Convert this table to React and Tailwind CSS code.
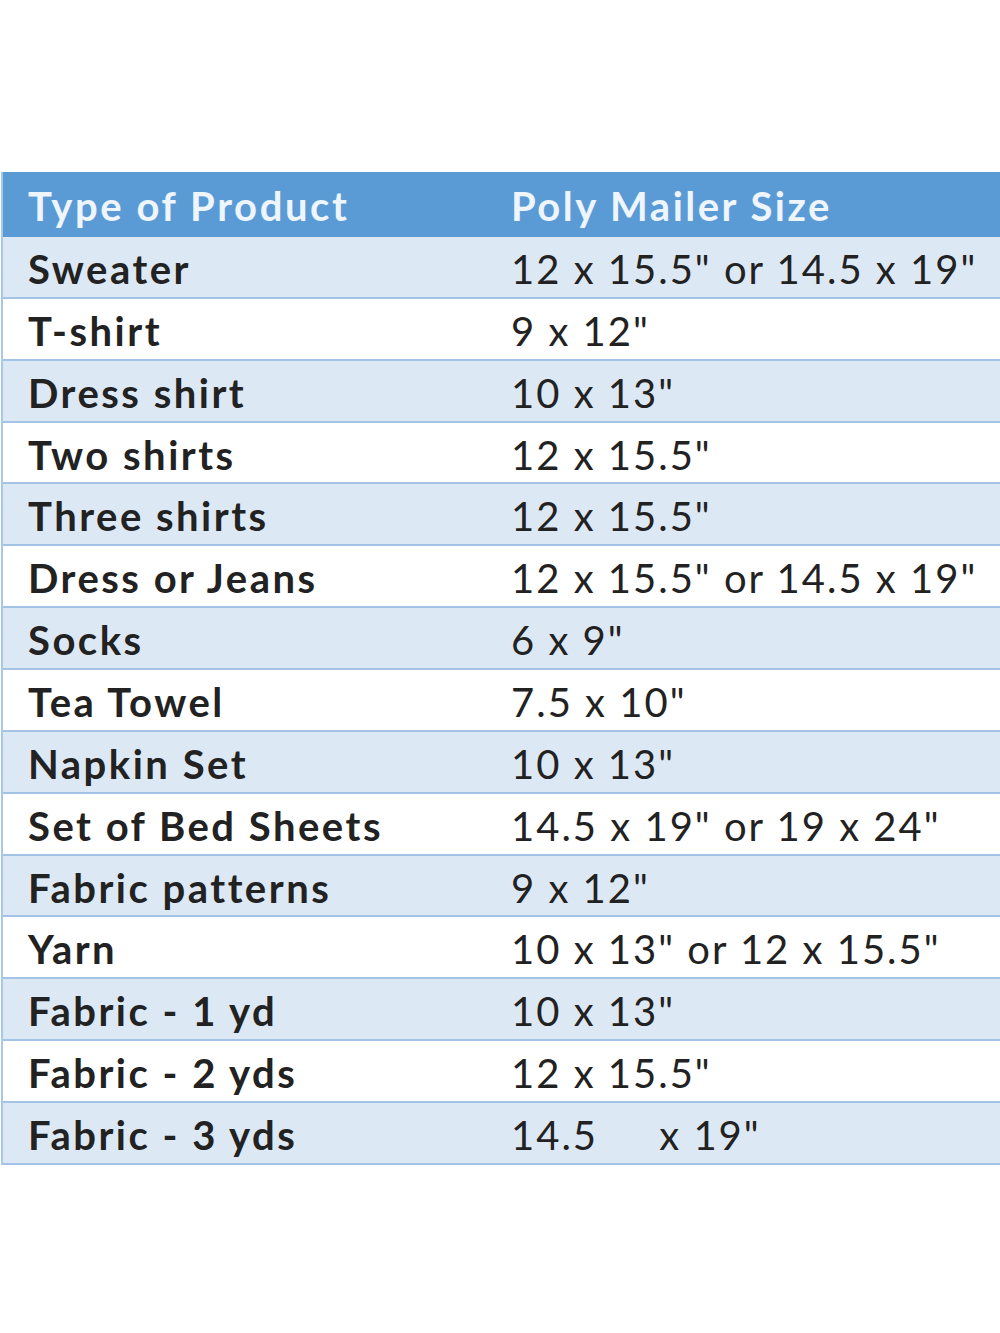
const rows = [
  ["Sweater", "12 x 15.5\" or 14.5 x 19\""],
  ["T-shirt", "9 x 12\""],
  ["Dress shirt", "10 x 13\""],
  ["Two shirts", "12 x 15.5\""],
  ["Three shirts", "12 x 15.5\""],
  ["Dress or Jeans", "12 x 15.5\" or 14.5 x 19\""],
  ["Socks", "6 x 9\""],
  ["Tea Towel", "7.5 x 10\""],
  ["Napkin Set", "10 x 13\""],
  ["Set of Bed Sheets", "14.5 x 19\" or 19 x 24\""],
  ["Fabric patterns", "9 x 12\""],
  ["Yarn", "10 x 13\" or 12 x 15.5\""],
  ["Fabric - 1 yd", "10 x 13\""],
  ["Fabric - 2 yds", "12 x 15.5\""],
  ["Fabric - 3 yds", "14.5     x 19\""],
];

export default function App() {
  return (
    <div className="w-[1000px] h-[1333px] bg-white pt-[172px]" style={{ fontFamily: "Lato, 'Open Sans', sans-serif" }}>
      <div className="border-l-2 border-[#a9c7e8] ml-[1px]">
        <div className="h-[65px] bg-[#5b9bd5] flex items-center text-[#eef5fc] font-bold text-[40px]">
          <div className="w-[508px] pl-[25px] pt-[2px] tracking-[2.6px]">Type of Product</div>
          <div className="flex-1 pt-[2px] tracking-[2.5px]">Poly Mailer Size</div>
        </div>
        {rows.map((r, i) => (
          <div
            key={i}
            className={`h-[61.87px] flex items-center border-b-2 border-[#a3c3e6] text-[#222222] text-[40px] ${i % 2 === 0 ? "bg-[#dde8f5]" : "bg-white"}`}
          >
            <div className="w-[508px] pl-[25px] pt-[4px] font-bold tracking-[2.5px]">{r[0]}</div>
            <div className="flex-1 pt-[4px] whitespace-pre tracking-[2px]">{r[1]}</div>
          </div>
        ))}
      </div>
    </div>
  );
}
